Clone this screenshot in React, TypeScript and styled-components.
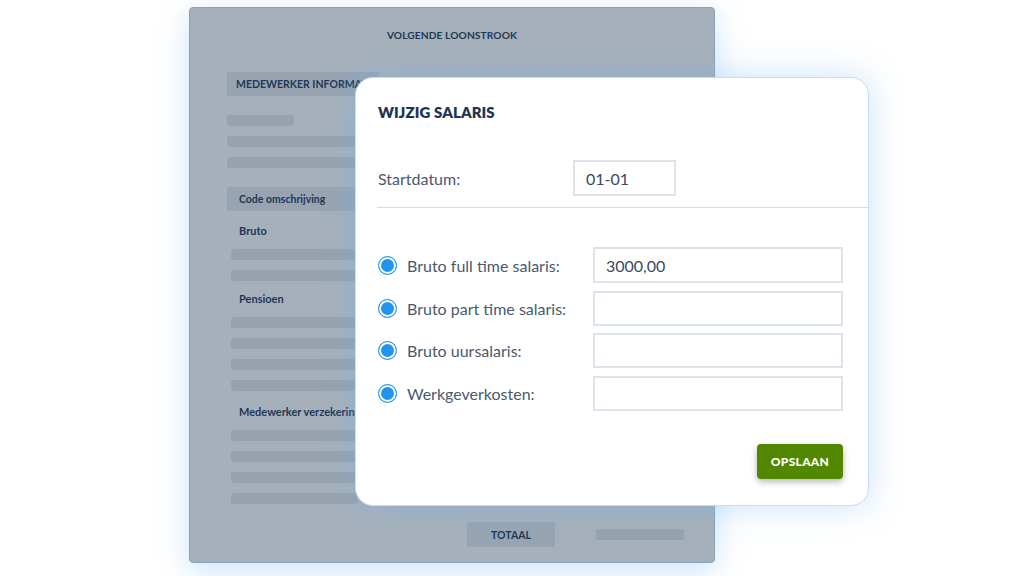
import styled, { createGlobalStyle } from 'styled-components'

const GlobalStyle = createGlobalStyle`
  html, body {
    margin: 0;
    padding: 0;
    background: #fff;
  }
  body {
    font-family: Lato, 'Open Sans', sans-serif;
  }
`

const Stage = styled.div`
  position: relative;
  width: 1024px;
  height: 576px;
  overflow: hidden;
  background: #fff;
  padding: 7px 0 0 189px;
  box-sizing: border-box;
`

// ---------- payslip document behind the dialog ----------

const Payslip = styled.div`
  width: 526px;
  height: 556px;
  box-sizing: border-box;
  background: #a6b0ba;
  border: 1px solid #86a2bf;
  border-radius: 4px;
  box-shadow: 0 8px 30px rgba(110, 175, 240, 0.35);
  padding: 19px 0 0 37px;
  display: flex;
  flex-direction: column;
  gap: 10px;
  color: #1e3855;
`

const DocTitle = styled.div`
  margin-left: -37px;
  text-align: center;
  font-size: 10.2px;
  line-height: 16px;
  font-weight: 700;
  letter-spacing: 0.1px;
  margin-bottom: 19px;
`

const DocHeader = styled.div<{ $width: number; $gap?: number; $top?: number }>`
  width: ${(p) => p.$width}px;
  height: 24px;
  margin-top: ${(p) => p.$top || 0}px;
  background: #98a4b1;
  display: flex;
  align-items: center;
  padding-left: ${(p) => (p.$gap ? p.$gap : 9)}px;
  box-sizing: border-box;
  font-size: 10.5px;
  font-weight: 700;
  white-space: nowrap;
  overflow: visible;
  margin-bottom: 9px;
`

const DocLabel = styled.div<{ $top?: number }>`
  margin-top: ${(p) => p.$top || 0}px;
  padding-left: 12px;
  font-size: 11px;
  line-height: 16px;
  font-weight: 700;
  white-space: nowrap;
`

const Bar = styled.div<{ $width: number; $indent?: number }>`
  width: ${(p) => p.$width}px;
  margin-left: ${(p) => p.$indent || 0}px;
  height: 11px;
  border-radius: 3px;
  background: #97a2ad;
`

const TotalRow = styled.div`
  margin-top: 8px;
  padding-left: 240px;
  display: flex;
  align-items: center;
  gap: 41px;
`

const TotalBox = styled.div`
  width: 88px;
  height: 25px;
  background: #98a4b1;
  display: flex;
  align-items: center;
  justify-content: center;
  font-size: 10.5px;
  font-weight: 700;
`

// ---------- dialog ----------

const Dialog = styled.div`
  position: absolute;
  left: 355px;
  top: 77px;
  width: 514px;
  height: 429px;
  box-sizing: border-box;
  background: #fff;
  border: 1px solid #c3def6;
  border-radius: 18px;
  box-shadow: 0 0 34px rgba(110, 180, 245, 0.38);
  padding: 24px 25px 0 22px;
  display: flex;
  flex-direction: column;
`

const DialogTitle = styled.h2`
  margin: 0;
  font-size: 15px;
  line-height: 20px;
  font-weight: 800;
  color: #1d3552;
  letter-spacing: 0.1px;
`

const DateRow = styled.div`
  margin-top: 38px;
  display: flex;
  align-items: center;
`

const Label = styled.span<{ $width: number }>`
  width: ${(p) => p.$width}px;
  flex: none;
  font-size: 16px;
  color: #4a5a6d;
`

const Field = styled.div<{ $width: number; $height?: number }>`
  width: ${(p) => p.$width}px;
  height: ${(p) => p.$height || 36}px;
  box-sizing: border-box;
  border: 2px solid #dde3ea;
  display: flex;
  align-items: center;
  padding-left: 11px;
  font-size: 16px;
  color: #3a4a5c;
`

const Divider = styled.hr`
  margin: 11px -25px 0 -1px;
  border: none;
  border-top: 1px solid #d5dde5;
`

const Rows = styled.div`
  margin-top: 39px;
  display: flex;
  flex-direction: column;
  gap: 7.5px;
`

const Row = styled.div`
  display: flex;
  align-items: center;
`

const Radio = styled.span`
  width: 19px;
  height: 19px;
  flex: none;
  box-sizing: border-box;
  border-radius: 50%;
  border: 1.5px solid #2195ee;
  background: #2195ee;
  box-shadow: inset 0 0 0 2px #fff;
  margin-right: 10px;
`

const ButtonBar = styled.div`
  margin-top: 33px;
  display: flex;
  justify-content: flex-end;
`

const SaveButton = styled.button`
  width: 86px;
  height: 35px;
  border: none;
  border-radius: 4px;
  background: #528700;
  color: #fff;
  font-family: inherit;
  font-size: 12px;
  font-weight: 900;
  letter-spacing: 0.3px;
  box-shadow: 0 3px 6px rgba(0, 0, 0, 0.28);
`

const salaryRows = [
  { label: 'Bruto full time salaris:', value: '3000,00' },
  { label: 'Bruto part time salaris:', value: '' },
  { label: 'Bruto uursalaris:', value: '' },
  { label: 'Werkgeverkosten:', value: '' },
]

export default function App() {
  return (
    <Stage>
      <GlobalStyle />
      <Payslip>
        <DocTitle>VOLGENDE LOONSTROOK</DocTitle>
        <DocHeader $width={152}>MEDEWERKER INFORMATIE</DocHeader>
        <Bar $width={67} />
        <Bar $width={160} />
        <Bar $width={160} />
        <DocHeader $width={160} $gap={12} $top={9}>
          Code omschrijving
        </DocHeader>
        <DocLabel $top={-7}>Bruto</DocLabel>
        <Bar $width={127} $indent={4} />
        <Bar $width={127} $indent={4} />
        <DocLabel>Pensioen</DocLabel>
        <Bar $width={127} $indent={4} />
        <Bar $width={127} $indent={4} />
        <Bar $width={127} $indent={4} />
        <Bar $width={127} $indent={4} />
        <DocLabel $top={3}>Medewerker verzekeringen</DocLabel>
        <Bar $width={127} $indent={4} />
        <Bar $width={127} $indent={4} />
        <Bar $width={127} $indent={4} />
        <Bar $width={127} $indent={4} />
        <TotalRow>
          <TotalBox>TOTAAL</TotalBox>
          <Bar $width={88} />
        </TotalRow>
      </Payslip>

      <Dialog>
        <DialogTitle>WIJZIG SALARIS</DialogTitle>
        <DateRow>
          <Label $width={195}>Startdatum:</Label>
          <Field $width={103}>01-01</Field>
        </DateRow>
        <Divider />
        <Rows>
          {salaryRows.map((r) => (
            <Row key={r.label}>
              <Radio />
              <Label $width={186}>{r.label}</Label>
              <Field $width={250} $height={r.value ? 36 : 35}>
                {r.value}
              </Field>
            </Row>
          ))}
        </Rows>
        <ButtonBar>
          <SaveButton>OPSLAAN</SaveButton>
        </ButtonBar>
      </Dialog>
    </Stage>
  )
}
